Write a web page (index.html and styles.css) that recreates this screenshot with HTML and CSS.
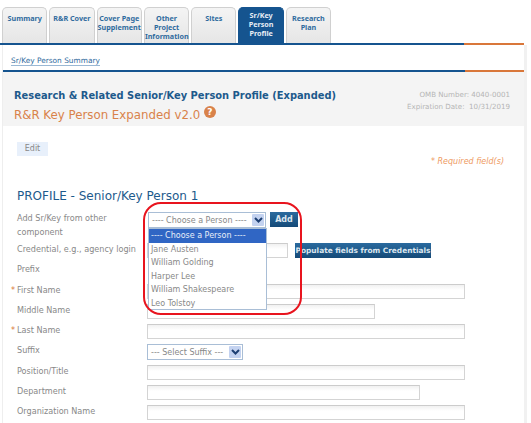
FILE: index.html
```html
<!DOCTYPE html>
<html lang="en">
<head>
  <meta charset="utf-8">
  <title>Senior/Key Person Profile</title>
  <link rel="stylesheet" href="styles.css">
</head>
<body>

<div class="tabs">
  <div class="tab">Summary</div>
  <div class="tab">R&amp;R Cover</div>
  <div class="tab">Cover Page Supplement</div>
  <div class="tab">Other Project Information</div>
  <div class="tab">Sites</div>
  <div class="tab active">Sr/Key Person Profile</div>
  <div class="tab">Research Plan</div>
</div>
<div class="rule"></div>

<div class="panel">
  <div class="subnav"><a href="#">Sr/Key Person Summary</a></div>
  <div class="rule"></div>

  <div class="form-head">
    <div>
      <h1>Research &amp; Related Senior/Key Person Profile (Expanded)</h1>
      <h2>R&amp;R Key Person Expanded v2.0 <span class="help">?</span></h2>
    </div>
    <div class="omb">
      <div>OMB Number: 4040-0001</div>
      <div>Expiration Date: &nbsp;10/31/2019</div>
    </div>
  </div>

  <div class="content">
    <div class="edit-row">
      <span class="edit">Edit</span>
      <span class="required-note">* Required field(s)</span>
    </div>

    <h3>PROFILE - Senior/Key Person 1</h3>

    <div class="fields">
      <div class="row first">
        <label>Add Sr/Key from other component</label>
        <div class="select person">
          <span>---- Choose a Person ----</span>
          <span class="arrow"><svg width="9" height="6" viewBox="0 0 9 6"><path d="M1 1l3.5 3.5L8 1" fill="none" stroke="#1d3f73" stroke-width="2"/></svg></span>
        </div>
        <button class="btn add">Add</button>
      </div>
      <div class="row">
        <label>Credential, e.g., agency login</label>
        <input class="credential" type="text">
        <button class="btn populate">Populate fields from Credentials</button>
      </div>
      <div class="row">
        <label>Prefix</label>
      </div>
      <div class="row">
        <label><i>*</i>First Name</label>
        <input class="wide" type="text">
      </div>
      <div class="row">
        <label>Middle Name</label>
        <input class="middle" type="text">
      </div>
      <div class="row">
        <label><i>*</i>Last Name</label>
        <input class="wide" type="text">
      </div>
      <div class="row">
        <label>Suffix</label>
        <div class="select suffix">
          <span>--- Select Suffix ---</span>
          <span class="arrow"><svg width="9" height="6" viewBox="0 0 9 6"><path d="M1 1l3.5 3.5L8 1" fill="none" stroke="#1d3f73" stroke-width="2"/></svg></span>
        </div>
      </div>
      <div class="row">
        <label>Position/Title</label>
        <input class="wide" type="text">
      </div>
      <div class="row">
        <label>Department</label>
        <input class="dept" type="text">
      </div>
      <div class="row">
        <label>Organization Name</label>
        <input class="wide" type="text">
      </div>
    </div>
  </div>
</div>

<!-- open dropdown and the red callout lie over the form -->
<ul class="dropdown">
  <li class="selected">---- Choose a Person ----</li>
  <li>Jane Austen</li>
  <li>William Golding</li>
  <li>Harper Lee</li>
  <li>William Shakespeare</li>
  <li>Leo Tolstoy</li>
</ul>
<div class="callout"></div>

</body>
</html>
```

FILE: styles.css
```css
* {
  box-sizing: border-box;
}
html, body {
  height: 423px;
  overflow: hidden;
}
body {
  position: relative;
  margin: 0;
  background: #fff;
  color: #888;
  font-family: "DejaVu Sans", sans-serif;
  font-size: 9px;
}

.tabs {
  display: flex;
  gap: 2px;
  height: 43px;
  padding: 7px 0 0 2px;
}
.tab {
  width: 45.3px;
  height: 36px;
  padding-top: 6px;
  border: 1px solid #d0d0d0;
  border-bottom: 0;
  border-radius: 5px 5px 0 0;
  background: linear-gradient(#f4f4f4, #e6e6e6);
  color: #2f6b9e;
  font-family: "Noto Sans", sans-serif;
  font-size: 7.2px;
  font-weight: bold;
  line-height: 9px;
  text-align: center;
}
.tab.active {
  padding-top: 3px;
  border-color: #15548f;
  background: #15548f;
  color: #e8eef5;
}

.rule {
  height: 2px;
  margin-right: 7px;
  background: linear-gradient(to right, #15548f 464px, #d9773a 464px);
}

.panel {
  height: 378px;
  margin-left: 2px;
  margin-right: 4px;
  border-left: 1px solid #eee;
  border-right: 3px solid #f1f1f1;
}
.panel > .rule {
  margin-right: 0;
  background: linear-gradient(to right, #15548f 462px, #d9773a 462px);
}

.subnav {
  height: 25px;
  padding: 10px 0 0 8px;
  font-size: 7.4px;
  line-height: 11px;
}
.subnav a {
  color: #2f6b9e;
  border-bottom: 1px solid #9ab8d4;
  text-decoration: none;
}

.form-head {
  display: flex;
  justify-content: space-between;
  height: 54px;
  padding: 17px 14px 0 11px;
  background: #f4f4f4;
}
h1 {
  margin: 0;
  color: #1d5a8c;
  font-size: 9.9px;
  font-weight: bold;
  line-height: 14px;
}
h2 {
  margin: 3px 0 0;
  color: #d9824a;
  font-size: 11.8px;
  font-weight: normal;
  line-height: 17px;
}
.help {
  display: inline-block;
  width: 12px;
  height: 12px;
  border-radius: 50%;
  background: #d9824a;
  color: #fff;
  font-size: 9px;
  font-weight: bold;
  line-height: 12px;
  text-align: center;
  vertical-align: 4px;
}
.omb {
  color: #b4b4b4;
  font-size: 7.1px;
  line-height: 12px;
  text-align: right;
}

.content {
  padding: 16px 0 0 14px;
}
.edit-row {
  display: flex;
  justify-content: space-between;
  align-items: flex-start;
  height: 46px;
  padding-right: 20px;
}
.edit {
  width: 31px;
  height: 14px;
  background: #e8f0fb;
  color: #888;
  font-size: 8px;
  line-height: 14px;
  text-align: center;
}
.required-note {
  margin-top: 14px;
  color: #ee9a62;
  font-size: 8px;
  font-style: italic;
  line-height: 12px;
}
h3 {
  margin: 0;
  color: #1d5a8c;
  font-size: 12px;
  font-weight: normal;
  line-height: 16px;
}

.fields {
  display: flex;
  flex-direction: column;
  margin-top: 7px;
}
.row {
  display: flex;
  align-items: flex-start;
  min-height: 20.3px;
  font-size: 8.1px;
}
.row.first {
  height: 32px;
  padding-top: 1px;
}
.row label {
  position: relative;
  flex: none;
  width: 130px;
  margin-top: -1px;
  padding-right: 8px;
  line-height: 14px;
}
.row label i {
  position: absolute;
  left: -6px;
  color: #d9773a;
  font-style: normal;
}

input {
  height: 15px;
  margin: 0;
  border: 1px solid #d4d4d4;
  border-top-color: #ccc;
  background: linear-gradient(#f1f1f1, #fff 5px);
}
.wide {
  width: 318px;
}
.middle {
  width: 228px;
}
.dept {
  width: 273px;
}
.credential {
  width: 141px;
}

.select {
  display: flex;
  justify-content: space-between;
  align-items: center;
  height: 16px;
  padding: 0 1px 0 3px;
  border: 1px solid #a9bed6;
  background: #fff;
  font-size: 8px;
  white-space: nowrap;
}
.select.person {
  width: 118px;
  margin-left: 1px;
}
.select.suffix {
  width: 96px;
}
.arrow {
  display: flex;
  justify-content: center;
  align-items: center;
  width: 12px;
  height: 12px;
  border-radius: 1px;
  background: #c3d2f0;
}

.btn {
  height: 15px;
  padding: 0;
  border: 0;
  background: linear-gradient(#2a6a9e, #154a78);
  color: #dce6ef;
  font-family: "DejaVu Sans", sans-serif;
  font-size: 7.4px;
  font-weight: bold;
}
.add {
  width: 28px;
  margin-left: 4px;
  font-size: 8px;
}
.populate {
  width: 136px;
  margin-left: 7px;
  white-space: nowrap;
}

.dropdown {
  position: absolute;
  left: 148px;
  top: 228px;
  width: 119px;
  height: 82px;
  margin: 0;
  padding: 0;
  border: 1px solid #a9bed6;
  background: #fff;
  font-size: 8px;
  line-height: 13.5px;
  list-style: none;
}
.dropdown li {
  padding-left: 2px;
  white-space: nowrap;
}
.dropdown .selected {
  background: #3066c4;
  color: #e8eef8;
}

.callout {
  position: absolute;
  left: 143px;
  top: 202px;
  width: 159px;
  height: 113px;
  border: 2px solid #e8141e;
  border-radius: 18px;
}
```
